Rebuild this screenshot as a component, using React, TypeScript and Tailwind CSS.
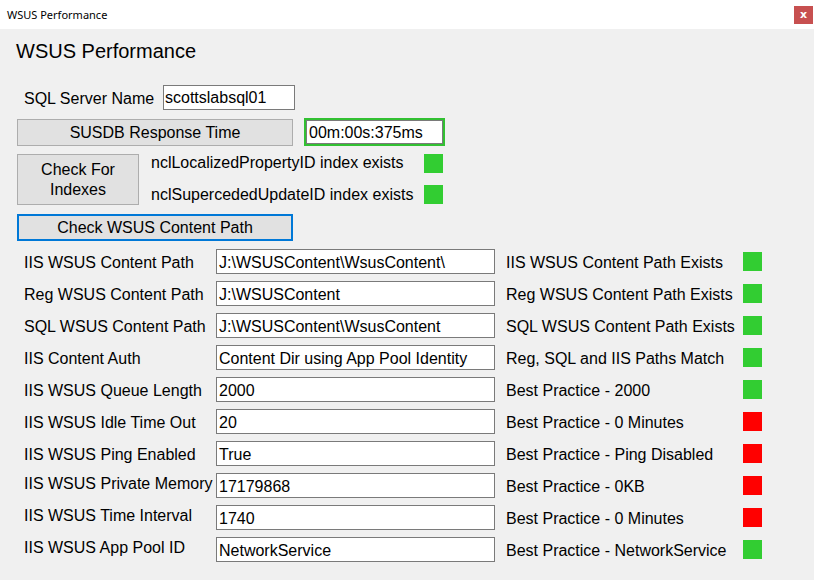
import React from "react";

type Row = { label: string; value: string; status: string; ok: boolean; lift?: boolean };

const rows: Row[] = [
  { label: "IIS WSUS Content Path", value: "J:\\WSUSContent\\WsusContent\\", status: "IIS WSUS Content Path Exists", ok: true },
  { label: "Reg WSUS Content Path", value: "J:\\WSUSContent", status: "Reg WSUS Content Path Exists", ok: true },
  { label: "SQL WSUS Content Path", value: "J:\\WSUSContent\\WsusContent", status: "SQL WSUS Content Path Exists", ok: true },
  { label: "IIS Content Auth", value: "Content Dir using App Pool Identity", status: "Reg, SQL and IIS Paths Match", ok: true },
  { label: "IIS WSUS Queue Length", value: "2000", status: "Best Practice - 2000", ok: true },
  { label: "IIS WSUS Idle Time Out", value: "20", status: "Best Practice - 0 Minutes", ok: false },
  { label: "IIS WSUS Ping Enabled", value: "True", status: "Best Practice - Ping Disabled", ok: false },
  { label: "IIS WSUS Private Memory", value: "17179868", status: "Best Practice - 0KB", ok: false, lift: true },
  { label: "IIS WSUS Time Interval", value: "1740", status: "Best Practice - 0 Minutes", ok: false, lift: true },
  { label: "IIS WSUS App Pool ID", value: "NetworkService", status: "Best Practice - NetworkService", ok: true, lift: true },
];

function Square({ ok }: { ok: boolean }) {
  return <div className={ok ? "w-[19px] h-[19px] bg-[#32cd32]" : "w-[19px] h-[19px] bg-[#ff0000]"} />;
}

export default function App() {
  return (
    <div className="w-[814px] h-[580px] overflow-hidden text-black" style={{ fontFamily: '"Liberation Sans", Arial, sans-serif' }}>
      {/* Title bar */}
      <div className="h-[29px] bg-white flex items-center justify-between pl-[7px] pr-[1px]">
        <span className="text-[11px] leading-none text-black" style={{ fontFamily: '"Noto Sans", sans-serif' }}>
          WSUS Performance
        </span>
        <div className="w-[19px] h-[18px] mt-[1px] bg-[#c75050] flex items-center justify-center text-white text-[11px] font-bold leading-none pb-[2px]" style={{ fontFamily: '"DejaVu Sans", sans-serif' }}>
          x
        </div>
      </div>

      {/* Body */}
      <div className="h-[551px] bg-[#f0f0f0] pt-[10px] text-[16px]">
        <div className="pl-[16px] text-[20px] leading-[24px]">WSUS Performance</div>

        {/* SQL Server Name */}
        <div className="mt-[22px] flex items-center h-[25px]">
          <div className="pl-[24px] w-[163px] leading-[20px] pt-[2px]">SQL Server Name</div>
          <div className="w-[132px] h-[25px] bg-white border border-[#7a7a7a] flex items-center pl-[1px] leading-[20px] pt-[1px]">
            scottslabsql01
          </div>
        </div>

        {/* SUSDB */}
        <div className="mt-[8px] flex items-center pl-[17px] gap-[11px]">
          <div className="w-[276px] h-[27px] bg-[#e1e1e1] border border-[#adadad] flex items-center justify-center leading-[20px] pt-[2px]">
            SUSDB Response Time
          </div>
          <div className="w-[141px] h-[28px] border-2 border-[#32c032]">
            <div className="w-full h-full bg-white border border-[#7a7a7a] flex items-center pl-[2px] leading-[20px] pt-[2px]">
              00m:00s:375ms
            </div>
          </div>
        </div>

        {/* Indexes */}
        <div className="mt-[8px] flex items-start pl-[17px] gap-[12px]">
          <div className="w-[122px] h-[51px] bg-[#e1e1e1] border border-[#adadad] flex items-center justify-center text-center leading-[20px] pt-[1px]">
            Check For
            <br />
            Indexes
          </div>
          <div className="flex flex-col gap-[12px]">
            <div className="flex items-center h-[19px]">
              <div className="w-[273px] leading-[20px] -mt-[1px]">nclLocalizedPropertyID index exists</div>
              <Square ok />
            </div>
            <div className="flex items-center h-[19px]">
              <div className="w-[273px] leading-[20px] pt-[1px]">nclSupercededUpdateID index exists</div>
              <Square ok />
            </div>
          </div>
        </div>

        {/* Check WSUS Content Path */}
        <div className="mt-[9px] pl-[17px]">
          <div className="w-[276px] h-[27px] bg-[#e1e1e1] border-2 border-[#0078d7] flex items-center justify-center leading-[20px] pt-[1px]">
            Check WSUS Content Path
          </div>
        </div>

        {/* Rows */}
        <div className="mt-[8px] flex flex-col gap-[7px]">
          {rows.map((r) => (
            <div key={r.label + r.status} className="flex items-center h-[25px]">
              <div className={r.lift ? "pl-[24px] w-[216px] leading-[20px] whitespace-nowrap mb-[4px]" : "pl-[24px] w-[216px] leading-[20px] whitespace-nowrap pt-[2px]"}>
                {r.label}
              </div>
              <div className="w-[279px] h-[25px] bg-white border border-[#7a7a7a] flex items-center pl-[2px] leading-[20px] pt-[2px] whitespace-nowrap overflow-hidden">
                {r.value}
              </div>
              <div className="ml-[11px] w-[237px] leading-[20px] whitespace-nowrap pt-[2px]">{r.status}</div>
              <Square ok={r.ok} />
            </div>
          ))}
        </div>
      </div>
    </div>
  );
}
